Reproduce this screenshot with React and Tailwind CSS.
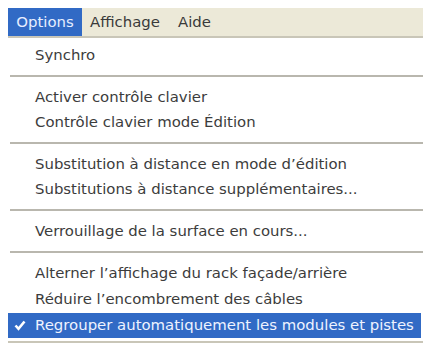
import React from "react";

const Sep = () => (
  <div className="pt-[7px] pb-[8px] pl-[2px]">
    <div className="h-[2px] bg-[#b9b7ae]" />
  </div>
);

const Item = ({ label, h = "h-[25px]" }) => (
  <div className={`${h} flex items-center pl-[27px] text-[#3c3c3c]`}>{label}</div>
);

const App = () => {
  return (
    <div
      className="w-[423px] h-[346px] bg-white pt-2 overflow-hidden text-[14.9px]"
      style={{ fontFamily: '"DejaVu Sans", Tahoma, Verdana, sans-serif' }}
    >
      {/* Menu bar */}
      <div className="ml-2 h-[30px] bg-[#ece9d8] border-b-2 border-[#c9c6b8] flex items-stretch">
        <div className="w-[74px] bg-[#316ac5] text-[#e6eeff] flex items-center justify-center">
          Options
        </div>
        <div className="ml-[8px] flex items-center text-[#3a3a3a]">Affichage</div>
        <div className="ml-[18px] flex items-center text-[#3a3a3a]">Aide</div>
      </div>

      {/* Dropdown */}
      <div className="ml-2 pt-[5px]">
        <Item label="Synchro" />
        <Sep />
        <Item label="Activer contrôle clavier" />
        <Item label="Contrôle clavier mode Édition" />
        <Sep />
        <Item label="Substitution à distance en mode d’édition" />
        <Item label="Substitutions à distance supplémentaires..." />
        <Sep />
        <Item label="Verrouillage de la surface en cours..." />
        <Sep />
        <Item label="Alterner l’affichage du rack façade/arrière" />
        <Item label="Réduire l’encombrement des câbles" h="h-[26px]" />
        <div className="mt-[1px] mr-[2px] h-[25px] bg-[#316ac5] text-[#eef3ff] flex items-center relative pl-[27px]">
          <svg
            className="absolute left-[6px] top-[7px]"
            width="12"
            height="11"
            viewBox="0 0 12 11"
          >
            <path d="M1.5 5.5 L4.5 8.8 L10.5 1.5" stroke="#ffffff" strokeWidth="2.6" fill="none" />
          </svg>
          Regrouper automatiquement les modules et pistes
        </div>
        <div className="mt-[3px] h-[2px] bg-[#c9c6b8]" />
      </div>
    </div>
  );
};

export default App;
